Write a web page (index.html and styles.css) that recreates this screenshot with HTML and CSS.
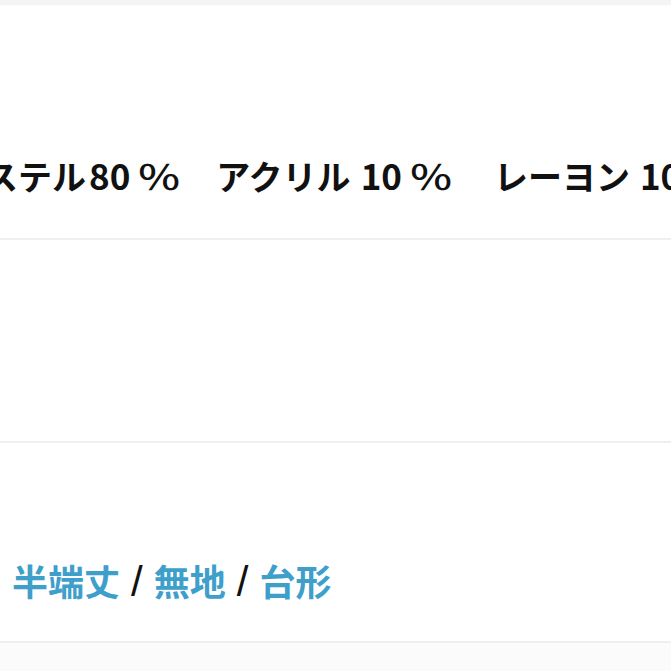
FILE: index.html
```html
<!DOCTYPE html>
<html lang="ja">
<head>
<meta charset="utf-8">
<link rel="stylesheet" href="styles.css">
</head>
<body>
<div class="topbar"></div>
<section class="row row-material">
  <p class="material">ポリエステル<span class="num">80</span><span class="pct">％</span>　アクリル<span class="num num-ten">10</span><span class="pct">％</span><span class="gap">　</span>レーヨン<span class="num num-ten">10</span><span class="pct">％</span></p>
</section>
<section class="row row-empty"></section>
<section class="row row-tags">
  <p class="tags"><a class="tag">半端丈</a><span class="sep">/</span><a class="tag">無地</a><span class="sep">/</span><a class="tag">台形</a></p>
</section>
<div class="footer"></div>
</body>
</html>
```
FILE: styles.css
```css
html, body {
  margin: 0;
  padding: 0;
  background: #ffffff;
  overflow: hidden;
}
body {
  width: 671px;
  height: 671px;
  font-family: "Noto Sans CJK JP", "Noto Sans", sans-serif;
}
.topbar {
  height: 4px;
  background: #f4f4f4;
  box-shadow: 0 1px 2px rgba(0,0,0,0.06);
}
.row {
  border-bottom: 2px solid #efefef;
  box-sizing: border-box;
  overflow: hidden;
}
.row-material {
  height: 236px;
  padding-top: 151px;
}
.material {
  margin: 0 0 0 -118px;
  white-space: nowrap;
  font-size: 34px;
  line-height: 40px;
  font-weight: 700;
  color: #111111;
}
.num {
  display: inline-block;
  margin: 0 6px 0 3px;
  font-size: 35px;
}
.num-ten {
  margin-left: 10px;
}
.pct {
  display: inline-block;
  width: 46px;
  text-align: center;
  transform: scaleX(1.3);
  font-weight: 500;
}
.gap {
  display: inline-block;
  width: 40px;
}
.row-empty {
  height: 203px;
}
.row-tags {
  height: 200px;
  padding-top: 117px;
}
.tags {
  margin: 0 0 0 12px;
  white-space: nowrap;
  font-size: 36px;
  line-height: 40px;
  font-weight: 700;
}
.tag {
  color: #3f9fcb;
}
.sep {
  display: inline-block;
  margin: 0 11px;
  line-height: 40px;
  color: #111111;
  font-family: "Liberation Sans", sans-serif;
  font-weight: 400;
  font-size: 42px;
}
.footer {
  height: 30px;
  background: #fbfbfb;
}
```
